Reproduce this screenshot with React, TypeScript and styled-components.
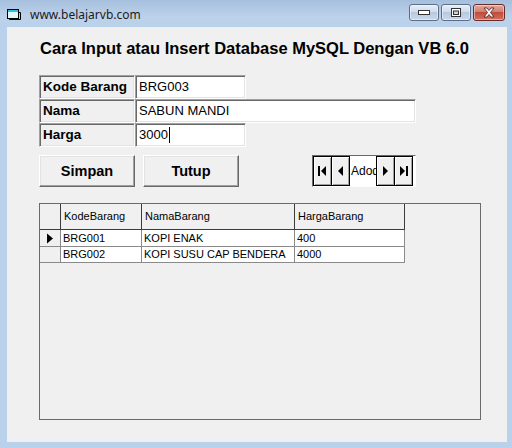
import React from "react";
import styled, { createGlobalStyle } from "styled-components";

const GlobalStyle = createGlobalStyle`
    html, body {
        margin: 0;
        padding: 0;
        background: #bad1eb;
    }
    body {
        font-family: "Liberation Sans", Arial, sans-serif;
    }
`;

const Window = styled.div`
    width: 512px;
    height: 448px;
    background: #bad1eb;
    display: flex;
    flex-direction: column;
    overflow: hidden;
`;

const TitleBar = styled.div`
    height: 27px;
    display: flex;
    align-items: center;
    padding: 0 7px 0 6px;
    background: linear-gradient(#a6bfdd, #bcd2ea 60%, #bad1eb);
`;

const TitleText = styled.span`
    margin-left: 8px;
    font-family: "Noto Sans", "Open Sans", sans-serif;
    font-size: 12px;
    color: #1b1b1b;
    flex: 1;
    padding-top: 1px;
`;

const CaptionButtons = styled.div`
    display: flex;
    gap: 2px;
    margin-top: -3px;
`;

const CaptionButton = styled.div<{ $close?: boolean }>`
    width: ${(p) => (p.$close ? "32px" : "30px")};
    height: 17px;
    box-sizing: border-box;
    border: 1px solid ${(p) => (p.$close ? "#6b2a2a" : "#5d6f88")};
    border-radius: 3px;
    display: flex;
    align-items: center;
    justify-content: center;
    background: ${(p) =>
        p.$close
            ? "linear-gradient(#e4a89d, #d07f72 45%, #c04c3c 50%, #d3705e)"
            : "linear-gradient(#e6eef8, #d0dcec 45%, #b8c9df 50%, #c8d8ec)"};
    box-shadow: inset 0 0 0 1px rgba(255, 255, 255, 0.45);
`;

const Client = styled.div`
    margin: 0 5px 6px 7px;
    flex: 1;
    background: #f0f0f0;
    display: flex;
    flex-direction: column;
    padding: 9px 0 0 32px;
`;

const Heading = styled.h1`
    margin: 0;
    height: 24px;
    line-height: 24px;
    font-family: "Liberation Sans", Arial, sans-serif;
    font-weight: bold;
    font-size: 16.5px;
    color: #000;
    padding-left: 1px;
    white-space: nowrap;
`;

const Form = styled.div`
    margin-top: 15px;
    display: grid;
    grid-template-columns: 96px auto;
    grid-auto-rows: 24px;
    justify-content: start;
`;

const sunken = `
    box-sizing: border-box;
    border: 1px solid;
    border-color: #a0a0a0 #ffffff #ffffff #a0a0a0;
    box-shadow: inset 1px 1px #696969, inset -1px -1px #e3e3e3;
`;

const Label = styled.div`
    ${sunken}
    display: flex;
    align-items: center;
    padding: 0 0 1px 3px;
    font-family: "Liberation Sans", Arial, sans-serif;
    font-weight: bold;
    font-size: 13.5px;
    color: #000;
`;

const TextBox = styled.div<{ $width: number }>`
    ${sunken}
    width: ${(p) => p.$width}px;
    background: #fff;
    display: flex;
    align-items: center;
    padding: 0 0 1px 3px;
    font-family: "Liberation Sans", Arial, sans-serif;
    font-size: 13px;
    color: #000;
`;

const Caret = styled.span`
    display: inline-block;
    width: 1px;
    height: 16px;
    background: #000;
    margin-left: 1px;
`;

const ButtonRow = styled.div`
    margin-top: 8px;
    display: flex;
    align-items: flex-start;
`;

const Button = styled.div`
    width: 96px;
    height: 32px;
    box-sizing: border-box;
    border: 1px solid;
    border-color: #ffffff #696969 #696969 #ffffff;
    box-shadow: inset -1px -1px #a0a0a0, inset 1px 1px #e3e3e3;
    background: #f0f0f0;
    display: flex;
    align-items: center;
    justify-content: center;
    font-family: "Liberation Sans", Arial, sans-serif;
    font-weight: bold;
    font-size: 14.5px;
    color: #000;
    & + & {
        margin-left: 8px;
    }
`;

const DataControl = styled.div`
    margin-left: 73px;
    width: 104px;
    height: 32px;
    box-sizing: border-box;
    border: 1px solid;
    border-color: #696969 #ffffff #ffffff #696969;
    display: flex;
    background: #fff;
`;

const NavButton = styled.div`
    width: 19px;
    height: 30px;
    box-sizing: border-box;
    border: 1px solid #000;
    background: #f0f0f0;
    box-shadow: inset 1px 1px #fff, inset -1px -1px #a0a0a0;
    display: flex;
    align-items: center;
    justify-content: center;
    & + & {
        margin-left: -1px;
    }
`;

const DataCaption = styled.div`
    width: 25px;
    height: 30px;
    overflow: hidden;
    background: #fff;
    display: flex;
    align-items: center;
    padding-left: 1px;
    font-family: "Liberation Sans", Arial, sans-serif;
    font-size: 12px;
    color: #000;
    white-space: nowrap;
`;

const Grid = styled.div`
    margin-top: 16px;
    width: 442px;
    height: 217px;
    box-sizing: border-box;
    border: 1px solid #6a6a6a;
    background: #f0f0f0;
`;

const GridTable = styled.div`
    display: grid;
    grid-template-columns: 21px 81px 153px 110px;
    grid-template-rows: 26px 17px 16px;
`;

const Cell = styled.div<{ $head?: boolean; $indicator?: boolean }>`
    box-sizing: border-box;
    background: ${(p) => (p.$head || p.$indicator ? "#f0f0f0" : "#ffffff")};
    border-right: 1px solid ${(p) => (p.$head ? "#3c3c3c" : "#8a8a8a")};
    border-bottom: 1px solid ${(p) => (p.$head ? "#3c3c3c" : "#8a8a8a")};
    display: flex;
    align-items: ${(p) => (p.$head ? "center" : "flex-end")};
    justify-content: ${(p) => (p.$indicator ? "center" : "flex-start")};
    padding: ${(p) => (p.$head ? "0 0 1px 3px" : p.$indicator ? "0" : "0 0 1px 2px")};
    font-family: "Liberation Sans", Arial, sans-serif;
    font-size: 11px;
    line-height: 13px;
    color: #000;
    white-space: nowrap;
    overflow: hidden;
`;

const AppIcon = () => (
    <svg width="16" height="14" viewBox="0 0 16 14">
        <rect x="1.5" y="2.5" width="11" height="9" fill="#dff6fb" stroke="#000" />
        <rect x="2" y="3" width="10" height="2" fill="#30c0e0" />
        <path d="M12.5 5.5h2v7h-11v-1" fill="none" stroke="#000" />
    </svg>
);

const Tri = ({ dir, bar }: { dir: "l" | "r"; bar?: boolean }) => (
    <svg width="11" height="12" viewBox="0 0 11 12">
        {dir === "l" ? (
            <>
                {bar && <rect x="1" y="1" width="2" height="10" fill="#000" />}
                <path d={bar ? "M9 1v10L4 6z" : "M8 1v10L3 6z"} fill="#000" />
            </>
        ) : (
            <>
                <path d={bar ? "M2 1v10l5-5z" : "M3 1v10l5-5z"} fill="#000" />
                {bar && <rect x="8" y="1" width="2" height="10" fill="#000" />}
            </>
        )}
    </svg>
);

const rows = [
    { kode: "BRG001", nama: "KOPI ENAK", harga: "400", current: true },
    { kode: "BRG002", nama: "KOPI SUSU CAP BENDERA", harga: "4000", current: false },
];

export default function App() {
    return (
        <>
            <GlobalStyle />
            <Window>
                <TitleBar>
                    <AppIcon />
                    <TitleText>www.belajarvb.com</TitleText>
                    <CaptionButtons>
                        <CaptionButton>
                            <svg width="12" height="5" viewBox="0 0 12 5">
                                <rect x="0.5" y="0.5" width="11" height="4" fill="#fff" stroke="#333" />
                            </svg>
                        </CaptionButton>
                        <CaptionButton>
                            <svg width="10" height="9" viewBox="0 0 10 9">
                                <rect x="0.5" y="0.5" width="9" height="8" fill="#fff" stroke="#333" />
                                <rect x="2.5" y="3" width="5" height="3.5" fill="#c6d5e8" stroke="#333" />
                            </svg>
                        </CaptionButton>
                        <CaptionButton $close>
                            <svg width="14" height="11" viewBox="0 0 14 11">
                                <path
                                    d="M2 1h3l2 2.5L9 1h3L8.5 5.5 12 10H9L7 7.5 5 10H2l3.5-4.5z"
                                    fill="#fff"
                                    stroke="#4a1f1f"
                                    strokeWidth="0.8"
                                />
                            </svg>
                        </CaptionButton>
                    </CaptionButtons>
                </TitleBar>
                <Client>
                    <Heading>Cara Input atau Insert Database MySQL Dengan VB 6.0</Heading>
                    <Form>
                        <Label>Kode Barang</Label>
                        <TextBox $width={111}>BRG003</TextBox>
                        <Label>Nama</Label>
                        <TextBox $width={281}>SABUN MANDI</TextBox>
                        <Label>Harga</Label>
                        <TextBox $width={111}>
                            3000
                            <Caret />
                        </TextBox>
                    </Form>
                    <ButtonRow>
                        <Button>Simpan</Button>
                        <Button>Tutup</Button>
                        <DataControl>
                            <NavButton>
                                <Tri dir="l" bar />
                            </NavButton>
                            <NavButton>
                                <Tri dir="l" />
                            </NavButton>
                            <DataCaption>Adodc1</DataCaption>
                            <NavButton>
                                <Tri dir="r" />
                            </NavButton>
                            <NavButton>
                                <Tri dir="r" bar />
                            </NavButton>
                        </DataControl>
                    </ButtonRow>
                    <Grid>
                        <GridTable>
                            <Cell $head $indicator />
                            <Cell $head>KodeBarang</Cell>
                            <Cell $head>NamaBarang</Cell>
                            <Cell $head>HargaBarang</Cell>
                            {rows.map((r) => (
                                <React.Fragment key={r.kode}>
                                    <Cell $indicator>
                                        {r.current && (
                                            <svg width="8" height="11" viewBox="0 0 8 11" style={{ marginBottom: 2 }}>
                                                <path d="M1 0.5v10l6-5z" fill="#000" />
                                            </svg>
                                        )}
                                    </Cell>
                                    <Cell>{r.kode}</Cell>
                                    <Cell>{r.nama}</Cell>
                                    <Cell>{r.harga}</Cell>
                                </React.Fragment>
                            ))}
                        </GridTable>
                    </Grid>
                </Client>
            </Window>
        </>
    );
}
